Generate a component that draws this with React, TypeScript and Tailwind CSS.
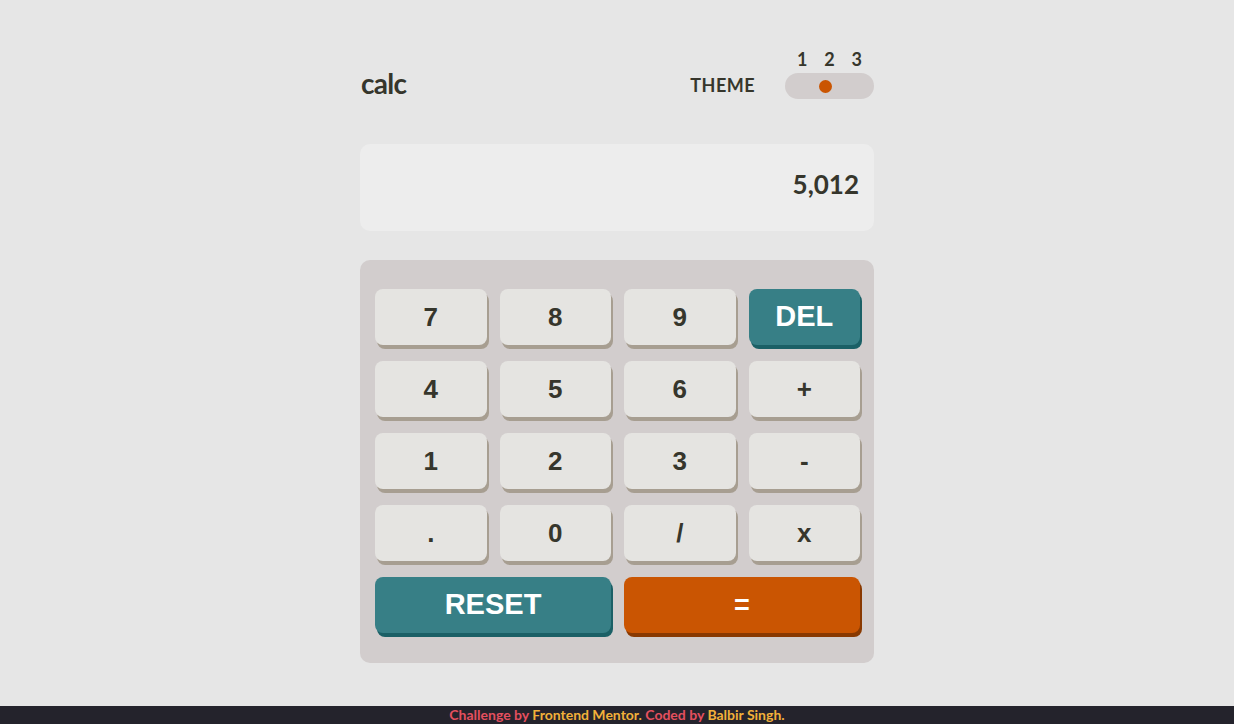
import React from 'react';

const keys: { label: string; kind: 'num' | 'del' }[] = [
  { label: '7', kind: 'num' },
  { label: '8', kind: 'num' },
  { label: '9', kind: 'num' },
  { label: 'DEL', kind: 'del' },
  { label: '4', kind: 'num' },
  { label: '5', kind: 'num' },
  { label: '6', kind: 'num' },
  { label: '+', kind: 'num' },
  { label: '1', kind: 'num' },
  { label: '2', kind: 'num' },
  { label: '3', kind: 'num' },
  { label: '-', kind: 'num' },
  { label: '.', kind: 'num' },
  { label: '0', kind: 'num' },
  { label: '/', kind: 'num' },
  { label: 'x', kind: 'num' },
];

const App: React.FC = () => {
  return (
    <div className="min-h-screen bg-[#e6e6e6] flex flex-col text-[#36362c]">
      <main className="flex-1 w-[514px] mx-auto pt-[50px]">
        <header className="flex justify-between items-end font-['Lato',sans-serif] font-bold">
          <h1 className="text-[28px] leading-none tracking-tight mb-[2px] ml-[1px]">calc</h1>
          <div className="flex items-end">
            <span className="text-[18px] leading-none mb-[5px] mr-[30px] tracking-wide">THEME</span>
            <div className="flex flex-col w-[89px]">
              <div className="flex justify-between px-[12px] text-[18px] leading-none mb-[5px]">
                <span>1</span>
                <span>2</span>
                <span>3</span>
              </div>
              <div className="h-[26px] rounded-full bg-[#d2cdcd] flex items-center justify-center">
                <span className="w-[13px] h-[13px] rounded-full bg-[#ca5502] ml-[-9px]" />
              </div>
            </div>
          </div>
        </header>

        <div className="mt-[45px] h-[87px] rounded-[10px] bg-[#ededed] flex items-center justify-end pr-[15px] pb-[7px] font-['Lato',sans-serif] font-bold text-[26px]">
          5,012
        </div>

        <div className="mt-[29px] rounded-[10px] bg-[#d2cdcd] pl-[15px] pr-[14px] pt-[29px] pb-[30px]">
          <div className="grid grid-cols-4 gap-x-[13px] gap-y-[16px] font-['Liberation_Sans',Arial,sans-serif] font-bold">
            {keys.map((k) =>
              k.kind === 'del' ? (
                <button
                  key={k.label}
                  className="h-[56px] rounded-[8px] bg-[#377f86] shadow-[2px_4px_0_#1b6066] text-white text-[29px]"
                >
                  {k.label}
                </button>
              ) : (
                <button
                  key={k.label}
                  className="h-[56px] rounded-[8px] bg-[#e5e4e1] shadow-[2px_4px_0_#a79e91] text-[#36362c] text-[26px]"
                >
                  {k.label}
                </button>
              )
            )}
            <button className="col-span-2 h-[56px] rounded-[8px] bg-[#377f86] shadow-[2px_4px_0_#1b6066] text-white text-[29px]">
              RESET
            </button>
            <button className="col-span-2 h-[56px] rounded-[8px] bg-[#ca5502] shadow-[2px_4px_0_#893901] text-white text-[27px]">
              =
            </button>
          </div>
        </div>
      </main>

      <footer className="h-[18px] bg-[#24232c] flex items-center justify-center font-['Lato',sans-serif] font-bold text-[14px] leading-none">
        <p className="text-[#e5505f]">
          Challenge by <span className="text-[#f2b13a]">Frontend Mentor.</span> Coded by{' '}
          <span className="text-[#f2b13a]">Balbir Singh.</span>
        </p>
      </footer>
    </div>
  );
};

export default App;
